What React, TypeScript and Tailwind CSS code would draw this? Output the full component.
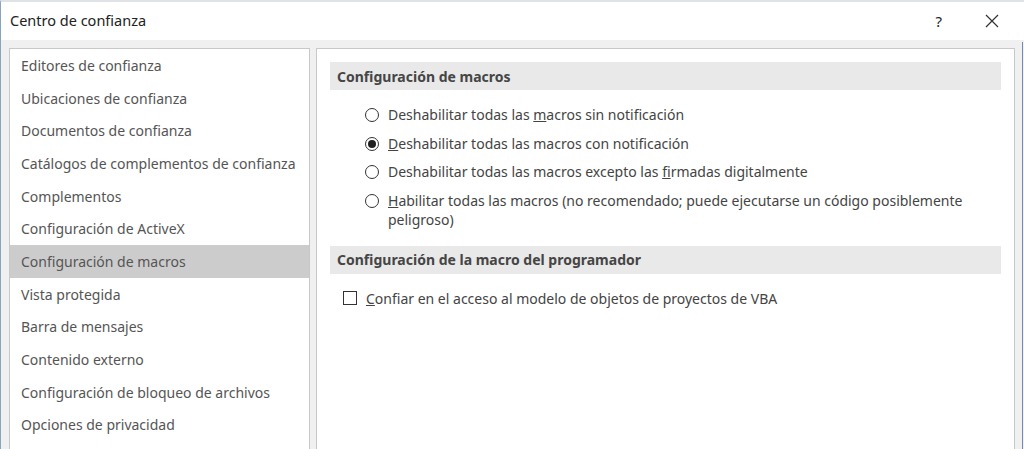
import React from 'react';

const font = { fontFamily: '"Noto Sans", "Open Sans", sans-serif' };

const navItems = [
  'Editores de confianza',
  'Ubicaciones de confianza',
  'Documentos de confianza',
  'Catálogos de complementos de confianza',
  'Complementos',
  'Configuración de ActiveX',
  'Configuración de macros',
  'Vista protegida',
  'Barra de mensajes',
  'Contenido externo',
  'Configuración de bloqueo de archivos',
  'Opciones de privacidad',
];

function Radio({ checked, children }: { checked?: boolean; children: React.ReactNode }) {
  return (
    <div className="flex items-start gap-[9px]">
      <span className="mt-[3px] flex h-[14px] w-[14px] shrink-0 items-center justify-center rounded-full border border-[#333] bg-white">
        {checked && <span className="h-[8px] w-[8px] rounded-full bg-[#1f1f1f]" />}
      </span>
      <span className="leading-[19px]">{children}</span>
    </div>
  );
}

function SectionHeader({ children }: { children: React.ReactNode }) {
  return (
    <div className="flex h-[28px] items-center bg-[#e9e9e9] px-[7px] text-[14px] font-bold text-[#454545]">
      {children}
    </div>
  );
}

export default function App() {
  return (
    <div
      className="relative h-[449px] w-[1024px] overflow-hidden border-l border-t-2 border-l-[#8aa4c0] border-t-[#dfe3e8] bg-[#f0f0f0] text-[14px] text-[#444]"
      style={font}
    >
      {/* title bar */}
      <div className="flex h-[38px] items-center bg-white pl-[9px] pr-[25px]">
        <span className="flex-1 text-[14.5px] text-[#222]">Centro de confianza</span>
        <span className="mr-[43px] text-[15px] text-[#222]">?</span>
        <svg width="14" height="14" viewBox="0 0 14 14" className="text-[#333]">
          <path d="M1 1 L13 13 M13 1 L1 13" stroke="currentColor" strokeWidth="1.2" />
        </svg>
      </div>

      <div className="flex gap-[6px] pl-[8px] pr-[8px] pt-[8px]">
        {/* category list */}
        <div className="h-[420px] w-[301px] shrink-0 border border-[#c8c8c8] bg-white">
          {navItems.map((item) => (
            <div
              key={item}
              className={
                'flex h-[32.7px] items-center pl-[11px] text-[#555] ' +
                (item === 'Configuración de macros' ? 'bg-[#cccccc] text-[#333]' : '')
              }
            >
              {item}
            </div>
          ))}
        </div>

        {/* settings pane */}
        <div className="mr-[1px] h-[420px] flex-1 border border-[#c8c8c8] bg-white px-[13px] pt-[13px]">
          <SectionHeader>Configuración de macros</SectionHeader>
          <div className="flex flex-col gap-[9.5px] pl-[35px] pr-[20px] pt-[15px] text-[#444]">
            <Radio>
              Deshabilitar todas las <u>m</u>acros sin notificación
            </Radio>
            <Radio checked>
              <u>D</u>eshabilitar todas las macros con notificación
            </Radio>
            <Radio>
              Deshabilitar todas las macros excepto las <u>f</u>irmadas digitalmente
            </Radio>
            <Radio>
              <u>H</u>abilitar todas las macros (no recomendado; puede ejecutarse un código posiblemente
              peligroso)
            </Radio>
          </div>
          <div className="mt-[17px]">
            <SectionHeader>Configuración de la macro del programador</SectionHeader>
          </div>
          <div className="flex items-center gap-[9px] pl-[13px] pt-[14px] text-[#444]">
            <span className="h-[14px] w-[14px] shrink-0 border border-[#333] bg-white" />
            <span>
              <u>C</u>onfiar en el acceso al modelo de objetos de proyectos de VBA
            </span>
          </div>
        </div>
      </div>

      {/* edge of the window behind */}
      <div className="absolute right-[1px] top-[40px] h-[409px] w-px bg-[#6f8db0]" />
    </div>
  );
}
